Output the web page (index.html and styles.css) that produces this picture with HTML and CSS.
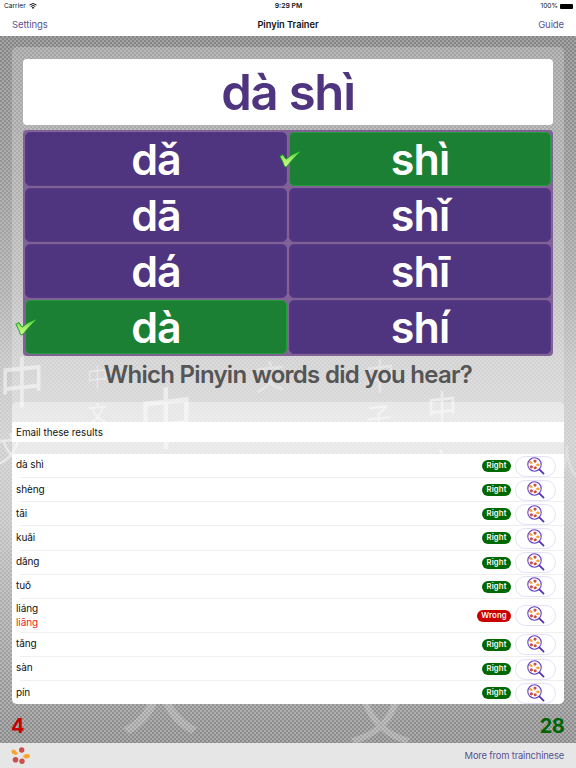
FILE: index.html
```html
<!DOCTYPE html>
<html lang="en">
<head>
<meta charset="utf-8">
<title>Pinyin Trainer</title>
<link rel="stylesheet" href="styles.css">
</head>
<body>
<svg class="defs" width="0" height="0" aria-hidden="true">
  <defs>
    <linearGradient id="leaf" x1="0" y1="0" x2="0" y2="1"><stop offset="0" stop-color="#3dcc36"/><stop offset=".5" stop-color="#a5ef6a"/><stop offset="1" stop-color="#c9ff83"/></linearGradient>
    <symbol id="check" viewBox="0 0 22 18"><path d="M.8 6.300 3.900 4.500 7 9.200Q13 3.800 20.500 1.200L21 2.200Q14 8.500 7.200 17L5.600 16.600Q4 11.500.8 6.300Z" fill="url(#leaf)" stroke="#159426" stroke-width=".9"/></symbol>
    <symbol id="beans" viewBox="0 0 20 18"><circle cx="10.700" cy="3" r="2.700" fill="#c9504b"/><path d="M.4 4Q2 1.500 4.500 3.500L7.200 6.800Q4.500 9 1.600 6.800Q0 5.500.4 4Z" fill="#f8a52e"/><path d="M11.500 9.200 15 7Q19 6.500 19 9.500Q17.500 12 14.500 11.400Z" fill="#f8a52e"/><circle cx="4.500" cy="12.700" r="2.800" fill="#c9504b"/><circle cx="11" cy="14.300" r="2.700" fill="#c9504b"/></symbol>
    <symbol id="lens" viewBox="0 0 18 18"><circle cx="7.500" cy="7.500" r="6.700" fill="#fff" stroke="#6542c0" stroke-width="1.100"/><path d="m12.300 12.300 4.300 4.300" stroke="#552db4" stroke-width="1.700" stroke-linecap="round"/><use href="#beans" x="1.700" y="2.300" width="11.800" height="10.600"/></symbol>
  </defs>
</svg>
<div class="app">
  <header>
    <div class="status"><span class="carrier">Carrier <svg width="8" height="6" viewBox="0 0 16 12"><path d="M1 4Q8-2 15 4M3.500 7Q8 3 12.500 7" fill="none" stroke="#111" stroke-width="2"/><path d="m5.500 9 2.500 3 2.500-3Q8 7 5.500 9Z"/></svg></span><span class="time">9:29 PM</span><span class="power">100% <i class="battery"></i></span></div>
    <nav><a>Settings</a><h1>Pinyin Trainer</h1><a>Guide</a></nav>
  </header>
  <main>
    <div class="weave"></div>
    <div class="ink" aria-hidden="true">
      <span class="g g1">中</span><span class="g g2">中</span><span class="g g3">文</span><span class="g g4">中</span><span class="g g5">文</span><span class="g g6">中</span><span class="g g7">子</span><span class="g g8">中</span><span class="g g9">文</span><span class="g g10">文</span><span class="g g11">人</span><span class="g g12">人</span><span class="g g13">文</span>
    </div>
    <section class="panel">
      <div class="quiz">
        <div class="word">dà shì</div>
        <div class="options">
          <div class="opt">dǎ</div><div class="opt right"><svg class="tick"><use href="#check"/></svg>shì</div>
          <div class="opt">dā</div><div class="opt">shǐ</div>
          <div class="opt">dá</div><div class="opt">shī</div>
          <div class="opt right"><svg class="tick"><use href="#check"/></svg>dà</div><div class="opt">shí</div>
        </div>
        <h2>Which Pinyin words did you hear?</h2>
      </div>
      <div class="results">
        <div class="email">Email these results</div>
        <div class="list">
          <div class="row"><span>dà shì</span><b>Right</b><i class="look"><svg><use href="#lens"/></svg></i></div>
          <div class="row"><span>shèng</span><b>Right</b><i class="look"><svg><use href="#lens"/></svg></i></div>
          <div class="row"><span>tāi</span><b>Right</b><i class="look"><svg><use href="#lens"/></svg></i></div>
          <div class="row"><span>kuǎi</span><b>Right</b><i class="look"><svg><use href="#lens"/></svg></i></div>
          <div class="row"><span>dǎng</span><b>Right</b><i class="look"><svg><use href="#lens"/></svg></i></div>
          <div class="row"><span>tuǒ</span><b>Right</b><i class="look"><svg><use href="#lens"/></svg></i></div>
          <div class="row tall"><span>liáng<em>liāng</em></span><b class="wrong">Wrong</b><i class="look"><svg><use href="#lens"/></svg></i></div>
          <div class="row"><span>tǎng</span><b>Right</b><i class="look"><svg><use href="#lens"/></svg></i></div>
          <div class="row"><span>sàn</span><b>Right</b><i class="look"><svg><use href="#lens"/></svg></i></div>
          <div class="row last"><span>pín</span><b>Right</b><i class="look"><svg><use href="#lens"/></svg></i></div>
        </div>
      </div>
    </section>
    <div class="score"><span class="bad">4</span><span class="good">28</span></div>
  </main>
  <footer><svg width="20" height="18"><use href="#beans"/></svg><a>More from trainchinese</a></footer>
</div>
</body>
</html>
```
FILE: styles.css
```css
* { box-sizing: border-box; }
body { margin: 0; font-family: Inter, sans-serif; color: #111; }
.defs { position: absolute; }
.app { width: 576px; height: 768px; display: flex; flex-direction: column; overflow: hidden; }
header { height: 36px; background: #fff; flex: none; }
.status { height: 12px; display: grid; grid-template-columns: 1fr 1fr 1fr; padding: 0 3px 0 4px; font-size: 6.6px; line-height: 12px; }
.carrier { display: flex; align-items: center; gap: 3px; }
.time { text-align: center; font-weight: 600; font-size: 6.8px; }
.power { display: flex; justify-content: flex-end; align-items: center; gap: 2px; }
.battery { width: 13px; height: 5px; background: #000; border-radius: 1px; }
nav { display: grid; grid-template-columns: 1fr 1fr 1fr; align-items: center; height: 24px; padding: 0 12px; font-size: 9.5px; letter-spacing: -.1px; }
nav a, footer a { color: #5b5291; }
nav a:last-child { text-align: right; }
h1 { margin: 0; text-align: center; font-size: 9.3px; font-weight: 600; letter-spacing: -.04px; }
main {
  position: relative; flex: 1; padding: 11px 12px 0; overflow: hidden;
  background: linear-gradient(#959595 0, #a3a3a3 18%, #bababa 36%, #cecece 46%, #d8d8d8 57%, #cecece 69%, #b3b3b3 85%, #9b9b9b 100%);
}
.weave {
  position: absolute; inset: 0;
  background: repeating-conic-gradient(rgba(255,255,255,.14) 0 25%, rgba(0,0,0,.1) 0 50%) 0 0 / 4px 4px;
  mask-image: linear-gradient(#000 0, rgba(0,0,0,.8) 20%, rgba(0,0,0,.35) 50%, rgba(0,0,0,.4) 65%, #000 95%);
}
.ink { position: absolute; inset: 0; color: rgba(255,255,255,.5); font-family: "Noto Sans CJK SC", sans-serif; font-weight: 400; }
.g { position: absolute; line-height: 1; transform: scaleY(1.2) skewY(-5deg); }
.g1 { left: -1px; top: 320px; font-size: 46px; }
.g2 { left: 87px; top: 330px; font-size: 21px; font-weight: 300; }
.g3 { left: 88px; top: 366px; font-size: 19px; }
.g4 { left: 138px; top: 351px; font-size: 56px; }
.g5 { left: 256px; top: 325px; font-size: 28px; opacity: .6; }
.g6 { left: 365px; top: 323px; font-size: 30px; opacity: .7; }
.g7 { left: 366px; top: 368px; font-size: 25px; }
.g8 { left: 427px; top: 355px; font-size: 30px; }
.g9 { left: 427px; top: 413px; font-size: 28px; }
.g10 { left: -3px; top: 397px; font-size: 28px; }
.g11 { left: 550px; top: 410px; font-size: 34px; opacity: .5; }
.g12 { left: 120px; top: 619px; font-size: 80px; opacity: .4; transform: scaleY(.95); font-weight: 500; }
.g13 { left: 349px; top: 643px; font-size: 63px; opacity: .45; transform: none; font-weight: 500; }
.panel { position: relative; height: 657px; background: rgba(255,255,255,.23); border-radius: 5px; padding-top: 12px; }
.quiz { height: 343px; padding: 0 11px; }
.word { height: 66px; background: #fff; border-radius: 4px; color: #4f347f; font-size: 49px; font-weight: 600; line-height: 67px; text-align: center; letter-spacing: -1.2px; }
.options { margin-top: 5px; height: 226px; padding: 2px; display: grid; grid-template-columns: 1fr 1fr; grid-auto-rows: 54px; gap: 2px; background: #806296; border-radius: 4px; }
.opt { position: relative; background: #4f347f; border: 1px solid #573a85; border-radius: 5px; color: #fff; font-size: 43px; line-height: 53px; font-weight: 600; text-align: center; letter-spacing: -.9px; }
.right { background: #1b8034; border-color: #219d3a; }
.tick { position: absolute; left: -11px; top: 17px; width: 22px; height: 18px; }
h2 { margin: 4px -8px 0; font-size: 24px; line-height: 29px; text-align: center; font-weight: 600; letter-spacing: -.73px; color: #555; white-space: nowrap; }
.results { height: 302px; background: rgba(255,255,255,.38); border-radius: 5px; padding-top: 20px; overflow: hidden; }
.email { height: 20px; padding-left: 4px; background: #fff; font-size: 9.8px; line-height: 21px; }
.list { margin-top: 12px; height: 250px; background: #fff; }
.row { position: relative; display: flex; align-items: center; height: 24.15px; padding: 0 8px 0 4px; font-size: 10px; letter-spacing: -.1px; background: linear-gradient(#efeff0,#efeff0) 8px 100% / 100% 1px no-repeat; }
.row span { flex: 1; line-height: 14px; position: relative; top: -1.6px; }
.row b { background: #006800; color: #fff; border-radius: 7px; width: 29px; height: 12px; line-height: 12.5px; font-size: 7.7px; text-align: center; font-weight: 600; letter-spacing: .15px; }
.row .wrong { background: #c90000; width: 34px; }
.row em { display: block; font-style: normal; color: #ee1c25; }
.row.tall { height: 34px; }
.row.tall span { top: 0; line-height: 13.4px; }
.row.last { background: none; }
.look { width: 41px; height: 21px; margin-left: 4px; border: 1px solid #e5dffa; border-radius: 11px; display: flex; justify-content: center; align-items: center; flex: none; }
.look svg { width: 18px; height: 18px; margin-top: -1px; }
.score { position: relative; display: flex; justify-content: space-between; padding-top: 8px; font-size: 20px; line-height: 28px; font-weight: 700; }
.bad { color: #c90000; margin-left: -1px; }
.good { color: #006400; letter-spacing: -.7px; }
footer { height: 25px; flex: none; background: #e6e6e6; display: flex; align-items: center; justify-content: space-between; padding: 0 12px 0 11px; font-size: 9.4px; letter-spacing: -.17px; }
```
